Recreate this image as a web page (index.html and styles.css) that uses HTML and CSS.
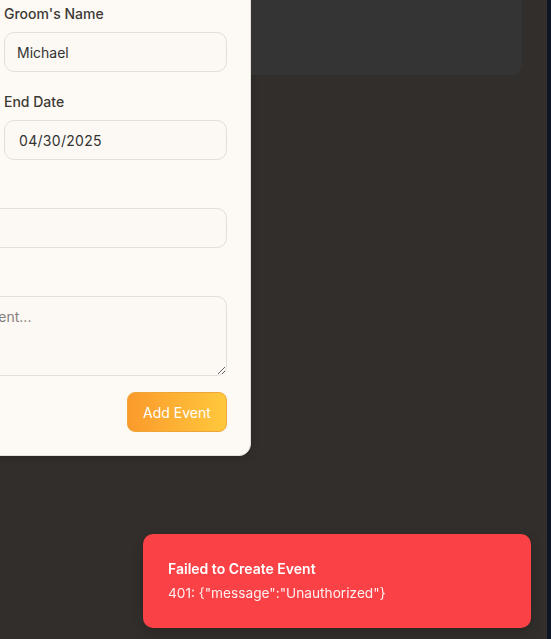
FILE: index.html
```html
<!DOCTYPE html>
<html lang="en">
<head>
<meta charset="utf-8">
<title>Add Event</title>
<link rel="stylesheet" href="styles.css">
</head>
<body>
  <main class="main">
    <div class="layout">
      <section class="card">
        <form class="form">
          <div class="grid">
            <div class="field">
              <label class="label">Bride's Name</label>
              <input class="input" type="text" value="Sarah">
            </div>
            <div class="field">
              <label class="label">Groom's Name</label>
              <input class="input" type="text" value="Michael">
            </div>
            <div class="field">
              <label class="label">Start Date</label>
              <input class="input input-date" type="text" value="04/28/2025">
            </div>
            <div class="field">
              <label class="label">End Date</label>
              <input class="input input-date" type="text" value="04/30/2025">
            </div>
            <div class="field full">
              <label class="label">Location</label>
              <input class="input" type="text" value="">
            </div>
            <div class="field full">
              <label class="label">Description</label>
              <textarea class="textarea" placeholder="Add any extra details about the event..."></textarea>
            </div>
          </div>
          <div class="actions">
            <button class="btn" type="button">Add Event</button>
          </div>
        </form>
      </section>
      <section class="panel"></section>
    </div>
  </main>
  <div class="edge"></div>

  <div class="toast" role="alert">
    <div class="toast-title">Failed to Create Event</div>
    <div class="toast-msg">401: {"message":"Unauthorized"}</div>
  </div>
</body>
</html>
```

FILE: styles.css
```css
* { box-sizing: border-box; }

html, body {
  margin: 0;
  height: 100%;
}

body {
  display: flex;
  overflow: hidden;
  background: #322e2b;
  font-family: Inter, "Noto Sans", sans-serif;
  color: #333;
}

.main {
  flex: 1;
  min-width: 0;
  overflow: hidden;
}

.edge {
  width: 4px;
  flex: none;
  background: #0e1626;
}

.layout {
  display: flex;
  align-items: flex-start;
  margin: -20px 0 0 -259px;
}

.card {
  width: 510px;
  flex: none;
  background: #fdf9f4;
  border: 1px solid #e4e0db;
  border-radius: 12px;
  padding: 23px;
  box-shadow: 0 2px 8px rgba(0, 0, 0, 0.15);
}

.panel {
  flex: 1;
  height: 95px;
  margin-right: 25px;
  background: #343434;
  border-radius: 0 0 10px 0;
}

.grid {
  display: grid;
  grid-template-columns: repeat(2, minmax(0, 1fr));
  column-gap: 16px;
  row-gap: 20px;
}

.field {
  display: flex;
  flex-direction: column;
  min-width: 0;
}

.full { grid-column: 1 / -1; }

.label {
  font-size: 14px;
  line-height: 20px;
  font-weight: 500;
  color: #3d3936;
  margin-bottom: 8px;
  white-space: nowrap;
}

.input,
.textarea {
  width: 100%;
  min-width: 0;
  font-family: Inter, "Noto Sans", sans-serif;
  font-size: 14px;
  color: #333;
  background: #fcf9f4;
  border: 1px solid #e2dfdb;
  border-radius: 10px;
  outline: none;
}

.input {
  height: 40px;
  padding: 0 12px;
}

.input-date {
  padding-left: 14px;
  letter-spacing: 0.3px;
}

.textarea {
  height: 80px;
  padding: 10px 12px 10px 7px;
  line-height: 20px;
  resize: vertical;
  display: block;
}

.textarea::placeholder { color: #85817e; }

.actions {
  display: flex;
  justify-content: flex-end;
  margin-top: 16px;
}

.btn {
  height: 40px;
  width: 100px;
  border: 1px solid #eea63a;
  border-radius: 8px;
  background: linear-gradient(90deg, #fb9a2c, #ffc83c);
  color: #fff;
  font-family: Inter, "Noto Sans", sans-serif;
  font-size: 14px;
}

.toast {
  position: fixed;
  right: 20px;
  bottom: 11px;
  width: 388px;
  padding: 25px;
  background: #f94146;
  border-radius: 10px;
  color: #fff;
  box-shadow: 0 4px 12px rgba(0, 0, 0, 0.2);
}

.toast-title {
  font-size: 14px;
  line-height: 20px;
  font-weight: 600;
}

.toast-msg {
  margin-top: 4px;
  font-size: 13.7px;
  line-height: 20px;
  opacity: 0.92;
}
```
